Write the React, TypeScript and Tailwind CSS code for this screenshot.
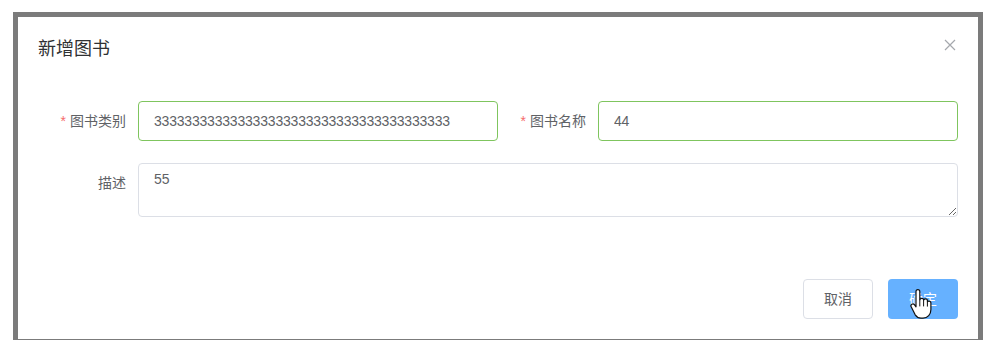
import React, { useState } from 'react';

const font = { fontFamily: '"Liberation Sans", "Noto Sans CJK SC", sans-serif' };

const HandCursor = () => (
  <svg width="22" height="30" viewBox="0 0 22 30" className="absolute left-[22px] top-[10px] pointer-events-none">
    <path
      d="M6 2.5c0-1.1.9-1.9 1.9-1.9s1.9.8 1.9 1.9v8.2c.3-.9 1.1-1.4 2-1.4 1 0 1.8.7 1.9 1.6.4-.6 1.1-1 1.8-1 1.1 0 2 .9 2 2v.8c.4-.4.9-.6 1.5-.6 1.1 0 1.9.9 1.9 2v6.4c0 5-3.2 8.6-7.9 8.6H11c-2.6 0-4.4-1.2-5.8-3.3L1.3 18c-.6-.9-.4-2.1.5-2.7.9-.6 2-.4 2.6.4L6 17.8V2.5z"
      fill="#fff"
      stroke="#111"
      strokeWidth="1.2"
      strokeLinejoin="round"
    />
    <path d="M9.8 11v6M13.6 11v6M17.4 12.6v4.6" stroke="#111" strokeWidth="1" strokeLinecap="round" />
  </svg>
);

const App = () => {
  const [form, setForm] = useState({
    category: '333333333333333333333333333333333333333',
    name: '44',
    desc: '55',
  });

  return (
    <div className="w-[999px] h-[355px] bg-white pt-[12px] pl-[13px]" style={font}>
      <div className="w-[970px] border-l-[5px] border-t-[5px] border-r-[5px] border-b border-[#7b7b7b] bg-white">
        <div className="flex flex-col bg-white">
          <div className="flex items-center justify-between px-5 pt-5 pb-[10px]">
            <span className="text-[18px] leading-6 text-[#303133]">新增图书</span>
            <button className="text-[#909399] -mt-2 mr-[2px]">
              <svg width="12" height="12" viewBox="0 0 12 12">
                <path d="M1 1l10 10M11 1L1 11" stroke="#a5a8ad" strokeWidth="1.2" />
              </svg>
            </button>
          </div>

          <div className="px-5 py-[30px] text-sm">
            <div className="flex mb-[22px]">
              <div className="flex w-[460px]">
                <label className="w-[100px] pr-3 text-right leading-10 text-[#606266]">
                  <span className="text-[#f56c6c] mr-1">*</span>图书类别
                </label>
                <input
                  className="w-[360px] h-10 px-[15px] rounded border border-[#7fc55e] text-[#606266] tracking-[-0.2px] outline-none"
                  value={form.category}
                  onChange={(e) => setForm({ ...form, category: e.target.value })}
                />
              </div>
              <div className="flex w-[460px]">
                <label className="w-[100px] pr-3 text-right leading-10 text-[#606266]">
                  <span className="text-[#f56c6c] mr-1">*</span>图书名称
                </label>
                <input
                  className="w-[360px] h-10 px-[15px] rounded border border-[#7fc55e] text-[#606266] tracking-[-0.2px] outline-none"
                  value={form.name}
                  onChange={(e) => setForm({ ...form, name: e.target.value })}
                />
              </div>
            </div>
            <div className="flex mb-[22px]">
              <label className="w-[100px] pr-3 text-right leading-10 text-[#606266]">描述</label>
              <textarea
                rows={2}
                className="w-[820px] h-[54px] px-[15px] py-[5px] leading-[1.5] rounded border border-[#dcdfe6] text-[#606266] outline-none resize-y"
                value={form.desc}
                onChange={(e) => setForm({ ...form, desc: e.target.value })}
              />
            </div>
          </div>

          <div className="flex justify-end gap-[15px] px-5 pt-[10px] pb-5">
            <button className="h-10 w-[70px] rounded border border-[#dcdfe6] bg-white text-sm text-[#606266]">取消</button>
            <div className="relative">
              <button className="h-10 w-[70px] rounded bg-[#66b1ff] text-sm text-white">确定</button>
              <HandCursor />
            </div>
          </div>
        </div>
      </div>
    </div>
  );
};

export default App;
